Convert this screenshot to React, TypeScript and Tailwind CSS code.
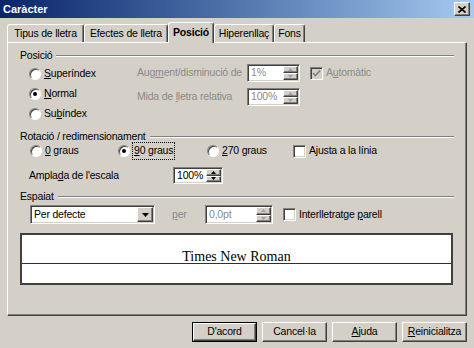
import React from "react"

const raised =
  "border border-t-white border-l-white border-r-[#404040] border-b-[#404040] shadow-[inset_-1px_-1px_0_#808080]"
const sunken =
  "border border-t-[#808080] border-l-[#808080] border-r-white border-b-white shadow-[inset_1px_1px_0_#404040,inset_-1px_-1px_0_#d4d0c8]"

function Radio({ checked }: { checked?: boolean }) {
  return (
    <span className="w-[12px] h-[12px] shrink-0 rounded-full bg-white border border-t-[#808080] border-l-[#808080] border-r-white border-b-white shadow-[inset_1px_1px_0_#404040] flex items-center justify-center">
      {checked && <span className="w-[4px] h-[4px] rounded-full bg-black" />}
    </span>
  )
}

function Check({ checked, disabled }: { checked?: boolean; disabled?: boolean }) {
  return (
    <span
      className={`w-[13px] h-[13px] shrink-0 flex items-center justify-center ${sunken} ${
        disabled ? "bg-[#d4d0c8]" : "bg-white"
      }`}
    >
      {checked && (
        <svg width="9" height="9" viewBox="0 0 9 9">
          <polyline
            points="1,4 3.5,6.5 8,1.5"
            fill="none"
            stroke={disabled ? "#808080" : "#000"}
            strokeWidth="1.7"
          />
        </svg>
      )}
    </span>
  )
}

function Arrow({ up, color }: { up?: boolean; color: string }) {
  return (
    <svg width="5" height="3" viewBox="0 0 5 3">
      <polygon points={up ? "2.5,0 5,3 0,3" : "0,0 5,0 2.5,3"} fill={color} />
    </svg>
  )
}

function Spin({
  value,
  disabled,
  className,
}: {
  value: string
  disabled?: boolean
  className: string
}) {
  const c = disabled ? "#a0a0a0" : "#000"
  return (
    <div className={`${sunken} bg-white flex p-[1px] ${className}`}>
      <span className={`flex-1 flex items-center pl-[2px] ${disabled ? "text-[#8a8a8a]" : ""}`}>
        {value}
      </span>
      <div className="w-[15px] flex flex-col">
        <div className={`flex-1 bg-[#d4d0c8] flex items-center justify-center ${raised}`}>
          <Arrow up color={c} />
        </div>
        <div className={`flex-1 bg-[#d4d0c8] flex items-center justify-center ${raised}`}>
          <Arrow color={c} />
        </div>
      </div>
    </div>
  )
}

function Group({ title }: { title: string }) {
  return (
    <div className="flex items-center h-[13px]">
      <span className="leading-[13px]">{title}</span>
      <div className="flex-1 ml-[4px] h-[2px] border-t border-t-[#808080] border-b border-b-white" />
    </div>
  )
}

function Button({
  children,
  primary,
}: {
  children: React.ReactNode
  primary?: boolean
}) {
  if (primary) {
    return (
      <div className="w-[65px] h-[20px] border border-black flex">
        <div className={`flex-1 flex items-center justify-center ${raised}`}>{children}</div>
      </div>
    )
  }
  return (
    <div className={`w-[65px] h-[20px] flex items-center justify-center ${raised}`}>
      {children}
    </div>
  )
}

const tabBase =
  "flex items-center justify-center border-t border-l border-t-white border-l-white border-r border-r-[#404040] rounded-t-[3px] shadow-[inset_-1px_0_0_#808080]"

export default function App() {
  return (
    <div className="w-[474px] h-[348px] bg-[#d4d0c8] overflow-hidden font-['Liberation_Sans',Arial,sans-serif] text-[10.5px] tracking-[-0.2px] whitespace-nowrap text-black flex flex-col">
      {/* title bar */}
      <div className="h-[18px] shrink-0 bg-gradient-to-r from-[#0a246a] to-[#a6caf0] flex items-center justify-between pl-[3px] pr-[4px]">
        <span className="text-white font-bold text-[11px] tracking-normal">Caràcter</span>
        <div className={`w-[16px] h-[14px] bg-[#d4d0c8] flex items-center justify-center ${raised}`}>
          <svg width="8" height="7" viewBox="0 0 8 7">
            <path d="M0.5 0.5 L7.5 6.5 M7.5 0.5 L0.5 6.5" stroke="#000" strokeWidth="1.6" />
          </svg>
        </div>
      </div>

      {/* tabs */}
      <div className="mt-[4px] h-[20px] ml-[7px] flex items-end">
        <div className={`${tabBase} w-[77px] h-[18px]`}>Tipus de lletra</div>
        <div className={`${tabBase} w-[84px] h-[18px]`}>Efectes de lletra</div>
        <div className={`${tabBase} w-[46px] h-[21px] -mb-[1px] relative z-10 bg-[#d4d0c8] font-bold`}>
          Posició
        </div>
        <div className={`${tabBase} w-[60px] h-[18px]`}>Hiperenllaç</div>
        <div className={`${tabBase} w-[31px] h-[18px]`}>Fons</div>
      </div>

      {/* tab page */}
      <div className="ml-[7px] w-[460px] h-[274px] border border-t-white border-l-white border-r-[#404040] border-b-[#404040] shadow-[inset_-1px_-1px_0_#808080] pl-[12px] pr-[12px] pt-[6px] flex flex-col">
        <Group title="Posició" />
        <div className="mt-[2px] flex">
          <div className="w-[117px] pl-[9px] flex flex-col">
            <label className="h-[20px] flex items-center gap-[3px]">
              <Radio />
              <span>
                <u>S</u>uperíndex
              </span>
            </label>
            <label className="h-[20px] flex items-center gap-[3px]">
              <Radio checked />
              <span>
                <u>N</u>ormal
              </span>
            </label>
            <label className="h-[20px] flex items-center gap-[3px]">
              <Radio />
              <span>
                Su<u>b</u>índex
              </span>
            </label>
          </div>
          <div className="flex flex-col gap-[6px] text-[#8a8a8a]">
            <div className="h-[18px] flex items-center">
              <span className="w-[110px]">
                Aug<u>m</u>ent/disminució de
              </span>
              <Spin value="1%" disabled className="w-[53px] h-[18px]" />
              <span className="ml-[10px] flex items-center gap-[3px]">
                <Check checked disabled />
                <span>
                  A<u>u</u>tomàtic
                </span>
              </span>
            </div>
            <div className="h-[18px] flex items-center">
              <span className="w-[110px]">
                Mida de <u>l</u>letra relativa
              </span>
              <Spin value="100%" disabled className="w-[53px] h-[18px]" />
            </div>
          </div>
        </div>

        <div className="mt-[6px]">
          <Group title="Rotació / redimensionament" />
        </div>
        <div className="h-[16px] pl-[10px] flex items-center">
          <label className="w-[88px] flex items-center gap-[3px]">
            <Radio />
            <span>
              <u>0</u> graus
            </span>
          </label>
          <label className="w-[89px] flex items-center gap-[3px]">
            <Radio checked />
            <span className="px-[1px] outline outline-1 outline-dotted outline-black">
              <u>9</u>0 graus
            </span>
          </label>
          <label className="w-[86px] flex items-center gap-[3px]">
            <Radio />
            <span>
              <u>2</u>70 graus
            </span>
          </label>
          <label className="flex items-center gap-[3px]">
            <Check />
            <span>Ajusta a la línia</span>
          </label>
        </div>
        <div className="mt-[8px] h-[17px] pl-[9px] flex items-center">
          <span className="w-[144px]">
            Ampla<u>d</u>a de l'escala
          </span>
          <Spin value="100%" className="w-[50px] h-[17px]" />
        </div>

        <div className="mt-[6px]">
          <Group title="Espaiat" />
        </div>
        <div className="mt-[2px] h-[19px] pl-[10px] flex items-center">
          <div className={`w-[125px] h-[19px] bg-white flex p-[1px] ${sunken}`}>
            <span className="flex-1 flex items-center pl-[2px]">Per defecte</span>
            <div className={`w-[16px] bg-[#d4d0c8] flex items-center justify-center ${raised}`}>
              <svg width="7" height="4" viewBox="0 0 7 4">
                <polygon points="0,0 7,0 3.5,4" fill="#000" />
              </svg>
            </div>
          </div>
          <span className="ml-[17px] w-[33px] text-[#8a8a8a]">
            <u>p</u>er
          </span>
          <Spin value="0,0pt" disabled className="w-[68px] h-[19px]" />
          <label className="ml-[10px] flex items-center gap-[3px]">
            <Check />
            <span>
              Interlletratge <u>p</u>arell
            </span>
          </label>
        </div>

        <div className="mt-[9px] w-[433px] h-[52px] border-2 border-[#404040] bg-white flex flex-col">
          <div className="h-[29px] flex items-end justify-center border-b border-b-[#303030]">
            <span className="font-['Liberation_Serif','Times_New_Roman',serif] text-[14px] tracking-normal leading-[14px] translate-y-[1px]">
              Times New Roman
            </span>
          </div>
        </div>
      </div>

      {/* buttons */}
      <div className="mt-[6px] w-[467px] flex justify-end gap-[5px]">
        <Button primary>D'acord</Button>
        <Button>Cancel·la</Button>
        <Button>
          <span>
            <u>A</u>juda
          </span>
        </Button>
        <Button>
          <span>
            <u>R</u>einicialitza
          </span>
        </Button>
      </div>
    </div>
  )
}
